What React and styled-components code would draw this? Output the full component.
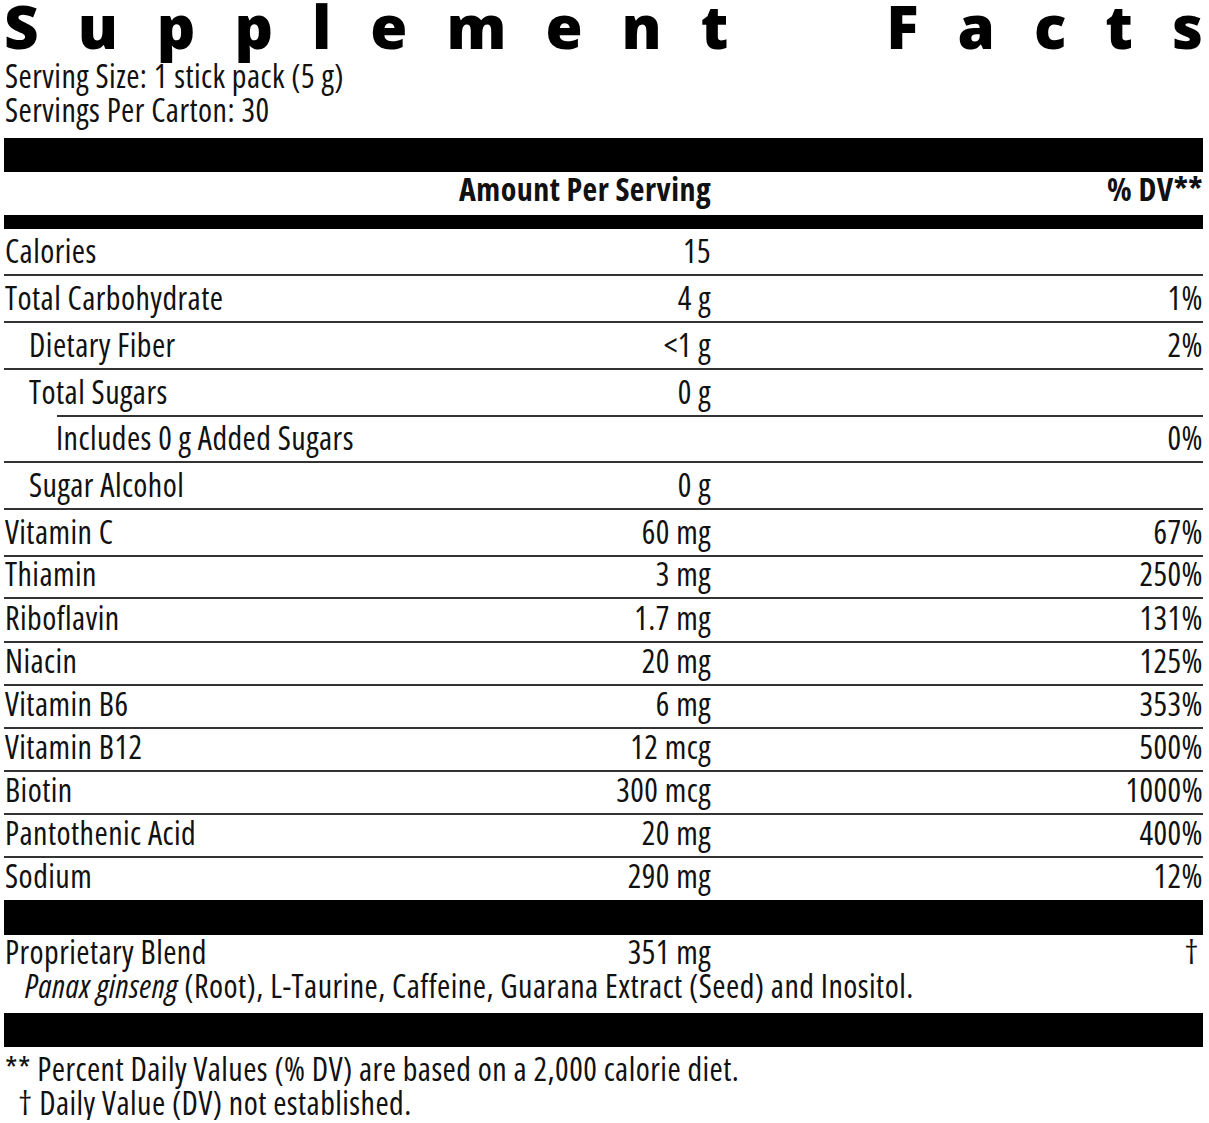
import React from "react"
import styled, { createGlobalStyle } from "styled-components"

const GlobalStyle = createGlobalStyle`
  html, body {
    margin: 0;
    padding: 0;
    background: #fff;
  }
  body {
    font-family: "Open Sans", "DejaVu Sans Condensed", "Liberation Sans", sans-serif;
    font-stretch: 75%;
    font-weight: 400;
    color: #111;
  }
`

const Label = styled.div`
  width: 1199px;
  margin: 0 6px 0 4px;
  font-size: 32px;
  letter-spacing: 0.45px;
`

const Title = styled.h1`
  display: flex;
  justify-content: space-between;
  height: 50px;
  margin: 0 0 9px;
  font-family: "Open Sans", "DejaVu Sans", sans-serif;
  font-stretch: 100%;
  font-weight: 800;
  font-size: 60px;
  line-height: 52px;
  letter-spacing: 0;
  color: #000;
`

const TitleGap = styled.span`
  width: 80px;
`

const ServingLine = styled.div`
  padding-left: 1px;
  line-height: 34px;
`

const Bar = styled.div`
  height: ${p => p.$h}px;
  margin-top: ${p => p.$top || 0}px;
  background: #000;
`

const Grid = styled.div`
  display: grid;
  grid-template-columns: 1fr 320px 492px;
  align-items: end;
  white-space: nowrap;
`

const HeaderRow = styled(Grid)`
  height: 43px;
  padding-bottom: 11px;
  box-sizing: border-box;
  font-weight: 700;
  line-height: 30px;
`

const Row = styled(Grid)`
  height: ${p => p.$h}px;
  box-sizing: border-box;
  padding-bottom: ${p => (p.$noRule ? 9 : 10)}px;
  line-height: 30px;
  background: ${p => (p.$noRule ? "none" : "linear-gradient(#333, #333) no-repeat")};
  background-size: calc(100% - ${p => p.$ruleInset || 0}px) 2px;
  background-position: right bottom;
`

const Name = styled.span`
  padding-left: ${p => p.$indent || 1}px;
`

const Amount = styled.span`
  grid-column: 2;
  text-align: right;
`

const Dv = styled.span`
  grid-column: 3;
  text-align: right;
`

const Blend = styled.div`
  padding: 0 0 10px;
  line-height: 34px;
`

const BlendRow = styled(Grid)`
  align-items: baseline;
`

const Dagger = styled(Dv)`
  padding-right: 4px;
`

const Ingredients = styled.div`
  padding-left: 21px;
  white-space: nowrap;

  em {
    font-style: italic;
  }
`

const Footnotes = styled.div`
  padding-top: 5px;
  line-height: 34px;
`

const Footnote = styled.div`
  padding-left: ${p => p.$indent || 1}px;
`

const rows = [
  { name: "Calories", amount: "15", h: 47 },
  { name: "Total Carbohydrate", amount: "4 g", dv: "1%", h: 47 },
  { name: "Dietary Fiber", amount: "<1 g", dv: "2%", indent: 25, h: 47 },
  { name: "Total Sugars", amount: "0 g", indent: 25, h: 47, ruleInset: 53 },
  { name: "Includes 0 g Added Sugars", dv: "0%", indent: 52, h: 46 },
  { name: "Sugar Alcohol", amount: "0 g", indent: 25, h: 47 },
  { name: "Vitamin C", amount: "60 mg", dv: "67%", h: 47 },
  { name: "Thiamin", amount: "3 mg", dv: "250%", h: 42 },
  { name: "Riboflavin", amount: "1.7 mg", dv: "131%", h: 44 },
  { name: "Niacin", amount: "20 mg", dv: "125%", h: 43 },
  { name: "Vitamin B6", amount: "6 mg", dv: "353%", h: 43 },
  { name: "Vitamin B12", amount: "12 mcg", dv: "500%", h: 43 },
  { name: "Biotin", amount: "300 mcg", dv: "1000%", h: 43 },
  { name: "Pantothenic Acid", amount: "20 mg", dv: "400%", h: 43 },
  { name: "Sodium", amount: "290 mg", dv: "12%", h: 42, noRule: true },
]

const titleWords = ["Supplement", "Facts"]

const App = () => (
  <>
    <GlobalStyle />
    <Label>
      <Title>
        {titleWords.map((word, w) => (
          <React.Fragment key={word}>
            {w > 0 && <TitleGap />}
            {word.split("").map((ch, i) => (
              <span key={i}>{ch}</span>
            ))}
          </React.Fragment>
        ))}
      </Title>
      <ServingLine>Serving Size: 1 stick pack (5 g)</ServingLine>
      <ServingLine>Servings Per Carton: 30</ServingLine>

      <Bar $h={34} $top={11} />
      <HeaderRow>
        <Amount>Amount Per Serving</Amount>
        <Dv>% DV**</Dv>
      </HeaderRow>
      <Bar $h={14} />

      {rows.map(r => (
        <Row key={r.name} $h={r.h} $ruleInset={r.ruleInset} $noRule={r.noRule}>
          <Name $indent={r.indent}>{r.name}</Name>
          <Amount>{r.amount}</Amount>
          <Dv>{r.dv}</Dv>
        </Row>
      ))}

      <Bar $h={35} />
      <Blend>
        <BlendRow>
          <Name>Proprietary Blend</Name>
          <Amount>351 mg</Amount>
          <Dagger>†</Dagger>
        </BlendRow>
        <Ingredients>
          <em>Panax ginseng</em> (Root), L-Taurine, Caffeine, Guarana Extract (Seed) and Inositol.
        </Ingredients>
      </Blend>
      <Bar $h={34} />

      <Footnotes>
        <Footnote>** Percent Daily Values (% DV) are based on a 2,000 calorie diet.</Footnote>
        <Footnote $indent={14}>† Daily Value (DV) not established.</Footnote>
      </Footnotes>
    </Label>
  </>
)

export default App
